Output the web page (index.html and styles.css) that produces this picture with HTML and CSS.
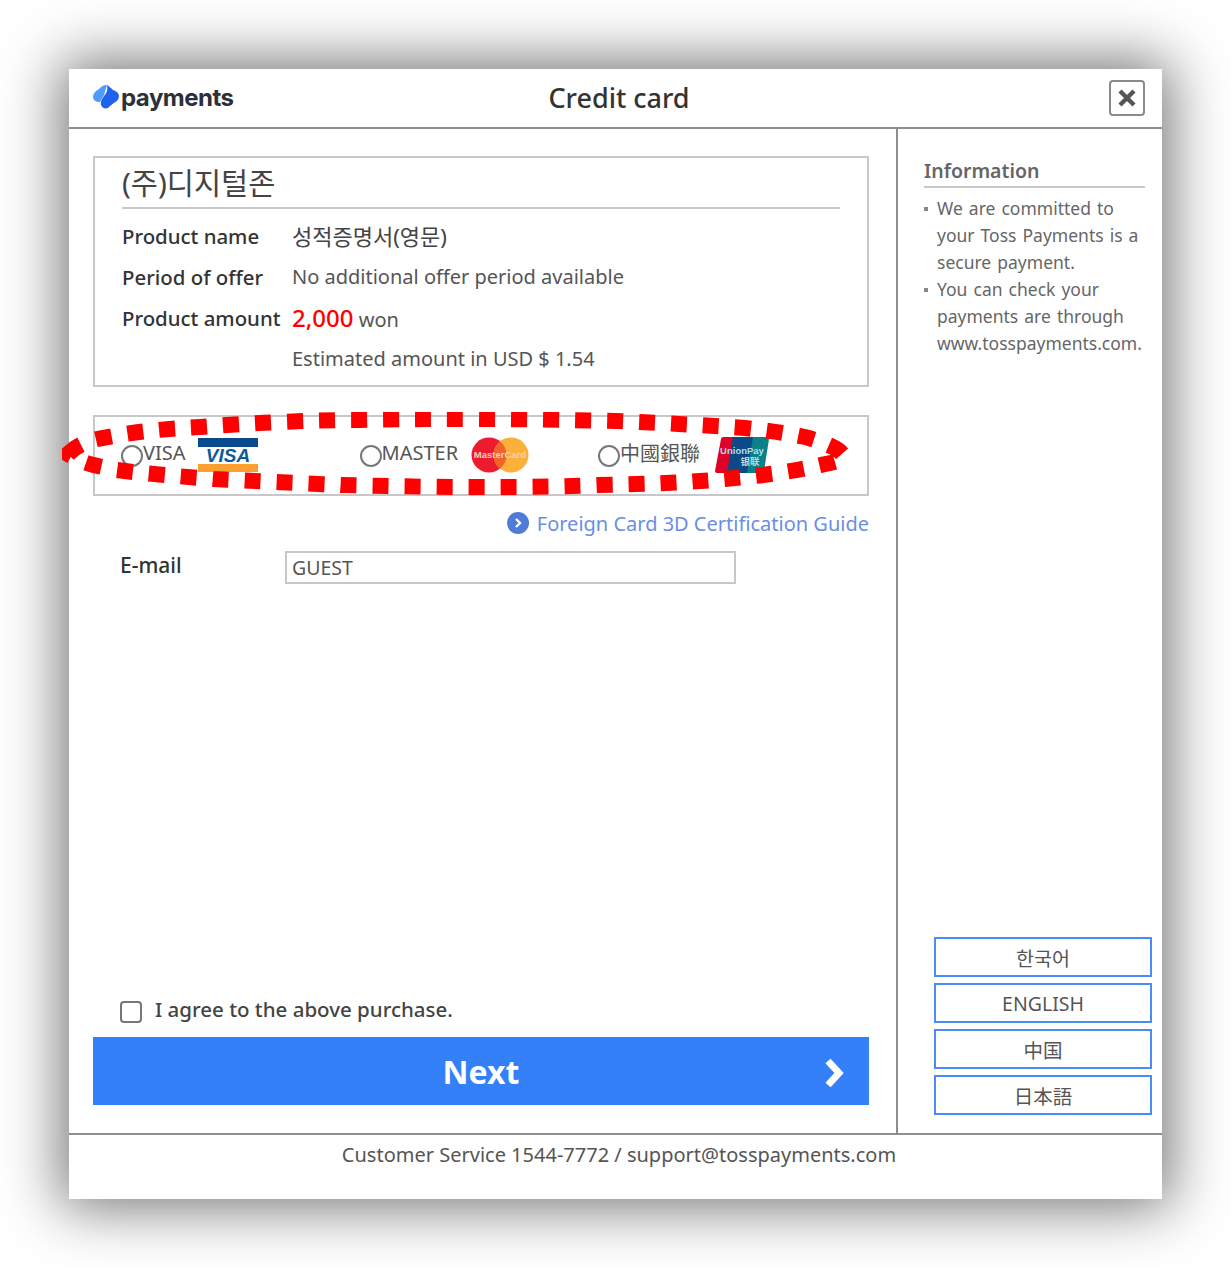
FILE: index.html
```html
<!DOCTYPE html>
<html lang="en">
<head>
  <meta charset="UTF-8" />
  <title>Credit card</title>
  <link rel="stylesheet" href="styles.css">
</head>
<body>
  <div class="modal">
    <div class="top-bar">
      <div class="logo">
        <svg class="logo-mark" viewBox="0 0 26 24" width="26" height="24">
          <path fill="#4d9bff" d="M14 0 C10 0 8 2 6 4 C2 6 0 9 0 12 C0 15 3 17 7 17 L11 10 Z"/>
          <path fill="#1f62ee" d="M14 0 C15 4 14 8 11 11 C9 14 7 17 8 20 C9 23 12 24 15 23 C17 21 19 19 21 18 C24 16 26 14 26 11 C26 8 23 6 20 5 C18 3 16 1 14 0 Z"/>
        </svg>
        <span class="logo-text">payments</span>
      </div>
      <h1>Credit card</h1>
      <button class="close-btn" aria-label="Close">
        <svg viewBox="0 0 20 20" width="20" height="20">
          <path d="M3 3 L17 17 M17 3 L3 17" stroke="#555" stroke-width="4.4" fill="none"/>
        </svg>
      </button>
    </div>

    <div class="content">
      <div class="main">
        <div class="order-box">
          <div class="shop-name">(주)디지털존</div>
          <div class="order-row"><span class="label">Product name</span><span class="value ko">성적증명서(영문)</span></div>
          <div class="order-row"><span class="label">Period of offer</span><span class="value">No additional offer period available</span></div>
          <div class="order-row"><span class="label">Product amount</span><span class="value"><strong class="price">2,000</strong> won</span></div>
          <div class="order-row"><span class="label"></span><span class="value">Estimated amount in USD $ 1.54</span></div>
        </div>

        <div class="methods">
          <label class="method">
            <input type="radio" name="card" />
            <span class="method-name">VISA</span>
            <svg class="card-visa" viewBox="0 0 60 34" width="60" height="34">
              <rect width="60" height="9" fill="#0a4a8c"/>
              <rect y="26" width="60" height="8" fill="#fca130"/>
              <text x="30" y="24" text-anchor="middle" class="visa-word">VISA</text>
            </svg>
          </label>
          <label class="method">
            <input type="radio" name="card" />
            <span class="method-name">MASTER</span>
            <svg class="card-master" viewBox="0 0 58 36" width="58" height="36">
              <circle cx="18" cy="18" r="17.5" fill="#ec1c2e"/>
              <circle cx="40" cy="18" r="17.5" fill="#fbb03a"/>
              <path d="M29 4.3 a17.5 17.5 0 0 1 0 27.4 a17.5 17.5 0 0 1 0 -27.4z" fill="#f0642a"/>
              <text x="29" y="21" text-anchor="middle" class="master-word">MasterCard</text>
            </svg>
          </label>
          <label class="method">
            <input type="radio" name="card" />
            <span class="method-name cjk-tc">中國銀聯</span>
            <svg class="card-union" viewBox="0 0 54 36" width="54" height="36">
              <path d="M9 0 H20 L14 36 H2 Q0 36 0 34 L6 2 Q6 0 9 0 Z" fill="#dd0228"/>
              <path d="M18 0 H40 L34 36 H12 Z" fill="#0c4a85"/>
              <path d="M38 0 H52 Q54 0 54 2 L49 34 Q49 36 46 36 H32 Z" fill="#0a8188"/>
              <text x="27" y="17" text-anchor="middle" class="union-word">UnionPay</text>
              <text x="35" y="28" text-anchor="middle" class="union-word">银联</text>
            </svg>
          </label>
          <svg class="highlight" viewBox="0 0 792 86" width="792" height="86">
            <path d="M6 42 C14 34 26 28 41 26 C70 20 100 17 138 15 C190 11 250 8 298 8 C340 7 370 7 408 7 C460 7 510 8 554 9 C600 11 640 13 683 16 C710 19 730 22 747 26 C760 30 770 34 776 38 C780 41 782 44 783 46 C775 50 768 51 759 53 C730 60 695 64 663 67 C620 71 580 72 535 73 C490 75 450 75 408 75 C365 75 320 74 279 73 C235 71 190 69 151 67 C115 64 85 62 55 58 C40 55 30 53 22 50 C15 47 10 45 6 42 Z" fill="none" stroke="#ff0000" stroke-width="16" stroke-dasharray="16 16"/>
          </svg>
        </div>

        <div class="guide">
          <svg viewBox="0 0 22 22" width="22" height="22">
            <circle cx="11" cy="11" r="11" fill="#4f7bd9"/>
            <path d="M9 7 L13 11 L9 15" stroke="#fff" stroke-width="2.4" fill="none"/>
          </svg>
          <a href="#">Foreign Card 3D Certification Guide</a>
        </div>

        <div class="email-row">
          <span class="email-label">E-mail</span>
          <input type="text" value="GUEST" />
        </div>

        <label class="agree">
          <input type="checkbox" />
          <span>I agree to the above purchase.</span>
        </label>
        <button class="next-btn">
          Next
          <svg viewBox="0 0 24 32" width="24" height="32">
            <path d="M5 4 L16 16 L5 28" stroke="#fff" stroke-width="7" fill="none"/>
          </svg>
        </button>
      </div>

      <div class="side">
        <h2>Information</h2>
        <ul>
          <li>We are committed to your Toss Payments is a secure payment.</li>
          <li>You can check your payments are through www.tosspayments.com.</li>
        </ul>
        <div class="lang-list">
          <button>한국어</button>
          <button>ENGLISH</button>
          <button class="cjk-sc">中国</button>
          <button class="cjk-jp">日本語</button>
        </div>
      </div>
    </div>

    <div class="footer">Customer Service 1544-7772 / support@tosspayments.com</div>
  </div>
</body>
</html>
```

FILE: styles.css
```css
* { box-sizing: border-box; }
html, body { height: 100%; }
body {
  margin: 0;
  padding: 69px 69px 0;
  height: 1268px;
  overflow: hidden;
  background: #fff;
  color: #555;
  font-family: "Noto Sans", "Noto Sans CJK KR", sans-serif;
  font-size: 20px;
}
button, input { font-family: inherit; }
.modal {
  width: 1093px;
  height: 1130px;
  background: #fff;
  display: flex;
  flex-direction: column;
  box-shadow: 0 0 55px 8px rgba(0,0,0,0.55);
}

.top-bar {
  display: grid;
  grid-template-columns: 1fr auto 1fr;
  align-items: center;
  height: 60px;
  padding: 0 17px 0 24px;
  border-bottom: 2px solid #8e8e8e;
}
.logo { display: flex; align-items: center; gap: 2px; margin-top: -2px; }
.logo-text {
  font-family: Inter, sans-serif;
  font-weight: 700;
  font-size: 24px;
  letter-spacing: -0.5px;
  color: #2b303b;
}
.top-bar h1 {
  margin: -1px 0 0;
  font-size: 27px;
  font-weight: 500;
  color: #333;
}
.close-btn {
  justify-self: end;
  width: 36px;
  height: 36px;
  padding: 0;
  display: flex;
  align-items: center;
  justify-content: center;
  background: #fff;
  border: 2px solid #8a8a8a;
  border-radius: 4px;
}

.content { flex: 1; display: flex; min-height: 0; }
.main {
  flex: none;
  width: 829px;
  padding: 27px 27px 28px 24px;
  border-right: 2px solid #8e8e8e;
  display: flex;
  flex-direction: column;
}

.order-box {
  height: 231px;
  padding: 0 27px;
  border: 2px solid #c8c8c8;
}
.shop-name {
  height: 51px;
  line-height: 50px;
  font-size: 29.5px;
  color: #444;
  border-bottom: 2px solid #c8c8c8;
  margin-bottom: 6px;
}
.order-row { display: flex; align-items: center; height: 41px; }
.label { width: 170px; font-size: 20.4px; font-weight: 500; color: #333; white-space: nowrap; }
.value { white-space: nowrap; }
.ko { color: #444; font-size: 22px; position: relative; top: -1px; }
.price { color: #f00; font-weight: 500; font-size: 24px; }

.methods {
  position: relative;
  display: flex;
  height: 81px;
  margin-top: 28px;
  padding: 0 0 0 26px;
  border: 2px solid #c8c8c8;
}
.method { display: flex; align-items: center; width: 238.5px; flex: none; }
.method input {
  appearance: none;
  flex: none;
  width: 22px;
  height: 22px;
  margin: 0;
  border: 2px solid #777;
  border-radius: 50%;
  background: #fff;
}
.method-name { position: relative; top: -3px; }
.card-visa { margin: -2px 0 0 12px; }
.card-master { margin: -2px 0 0 13px; }
.card-union { margin: -2px 0 0 15px; }
.cjk-tc { font-family: "Noto Sans CJK TC", sans-serif; }
.cjk-sc { font-family: "Noto Sans CJK SC", sans-serif; }
.cjk-jp { font-family: "Noto Sans CJK JP", sans-serif; }
.visa-word {
  font-family: "Liberation Sans", sans-serif;
  font-size: 19px;
  font-weight: 700;
  font-style: italic;
  fill: #0f5a9c;
}
.master-word {
  font-family: "Liberation Sans", sans-serif;
  font-size: 9.5px;
  font-weight: 700;
  fill: #f6d0c0;
}
.union-word {
  font-family: "Liberation Sans", "Noto Sans CJK SC", sans-serif;
  font-size: 9.5px;
  font-weight: 700;
  fill: #b9dbe0;
}
.highlight {
  position: absolute;
  left: -33px;
  top: -5px;
  pointer-events: none;
}

.guide {
  display: flex;
  justify-content: flex-end;
  align-items: center;
  gap: 8px;
  margin-top: 15px;
  height: 24px;
}
.guide a { color: #6a8ee6; text-decoration: none; }

.email-row { display: flex; align-items: flex-start; margin-top: 16px; padding-left: 27px; }
.email-label { width: 165px; font-size: 21px; font-weight: 500; color: #333; line-height: 28px; }
.email-row input {
  width: 451px;
  height: 33px;
  padding: 0 5px;
  border: 2px solid #c8c8c8;
  font-size: 19.5px;
  color: #555;
}

.agree {
  display: flex;
  align-items: center;
  gap: 13px;
  margin-top: auto;
  padding-left: 27px;
  font-size: 20.5px;
  font-weight: 500;
  color: #444;
}
.agree span { padding-bottom: 5px; }
.agree input {
  appearance: none;
  width: 22px;
  height: 22px;
  margin: 0;
  border: 2px solid #777;
  border-radius: 4px;
  background: #fff;
}
.next-btn {
  position: relative;
  flex: none;
  height: 68px;
  margin-top: 9px;
  padding: 1px 0 0;
  border: none;
  background: #3380f8;
  color: #fff;
  font-size: 32px;
  font-weight: 700;
}
.next-btn svg { position: absolute; right: 22px; top: 20px; }

.side {
  flex: 1;
  min-width: 0;
  padding: 28px 10px 18px 26px;
  display: flex;
  flex-direction: column;
}
.side h2 {
  margin: 0 7px 0 0;
  padding-bottom: 2px;
  font-size: 19.5px;
  font-weight: 600;
  color: #666;
  border-bottom: 2px solid #c8c8c8;
}
.side ul {
  list-style: none;
  margin: 7px 0 0;
  padding: 0 0 0 13px;
  font-size: 17.5px;
  word-spacing: 1.5px;
  line-height: 27px;
  color: #666;
}
.side li { position: relative; }
.side li::before {
  content: "";
  position: absolute;
  left: -13px;
  top: 12px;
  width: 4px;
  height: 4px;
  background: #888;
}
.lang-list {
  display: flex;
  flex-direction: column;
  gap: 6px;
  margin-top: auto;
  margin-left: 10px;
}
.lang-list button {
  height: 40px;
  padding: 0;
  background: #fff;
  border: 2px solid #4a8cf7;
  font-size: 19.5px;
  color: #555;
}

.footer {
  height: 66px;
  padding: 6px 0 0 7px;
  text-align: center;
  border-top: 2px solid #8e8e8e;
  color: #555;
}
```
